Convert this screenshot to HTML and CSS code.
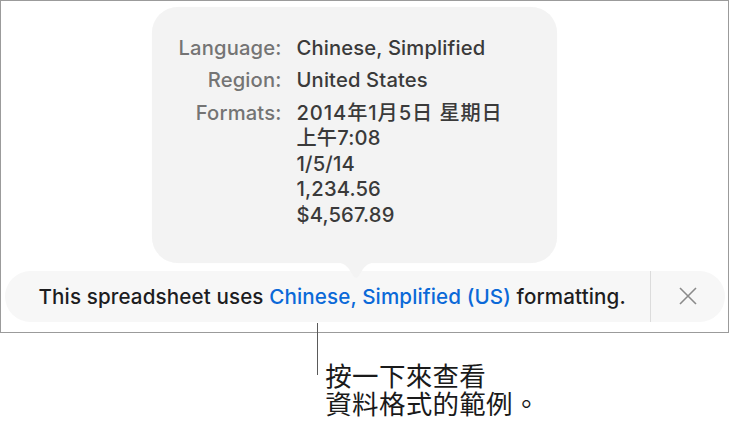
FILE: index.html
```html
<!DOCTYPE html>
<html lang="en">
<head>
<meta charset="utf-8">
<title>Formatting</title>
<link rel="stylesheet" href="styles.css">
</head>
<body>
<div class="frame">
  <div class="popover">
    <div class="info">
      <span class="label">Language:</span>
      <span class="value">Chinese, Simplified</span>
      <span class="label">Region:</span>
      <span class="value">United States</span>
      <span class="label">Formats:</span>
      <span class="value"><span class="cjk">2014年1月5日 星期日</span><br>上午7:08<br>1/5/14<br>1,234.56<br>$4,567.89</span>
    </div>
    <svg class="arrow" width="46" height="18" viewBox="0 0 46 18"><path d="M0 0 C8 0 12 2 16 7 L20.5 14 Q23 17.5 25.5 14 L30 7 C34 2 38 0 46 0 Z" fill="#f3f3f3"/></svg>
  </div>
  <div class="banner">
    <p class="msg">This spreadsheet uses <span class="link">Chinese, Simplified (US)</span> formatting.</p>
    <div class="divider"></div>
    <div class="close">
      <svg width="18" height="18" viewBox="0 0 18 18"><path d="M1 1 L17 17 M17 1 L1 17" stroke="#8a8a8a" stroke-width="1.6" fill="none"/></svg>
    </div>
  </div>
</div>
<div class="callout">
  <div class="leader"></div>
  <p class="caption"><span class="cap-line">按一下來查看</span><span class="cap-line">資料格式的範例。</span></p>
</div>
</body>
</html>
```
FILE: styles.css
```css
html, body {
  margin: 0;
  padding: 0;
  background: #ffffff;
}
body {
  font-family: Inter, "Liberation Sans", "Noto Sans CJK SC", sans-serif;
}
.frame {
  box-sizing: border-box;
  width: 729px;
  height: 333px;
  border: 1.5px solid #9b9b9b;
  padding-top: 5.5px;
}
.popover {
  position: relative;
  box-sizing: border-box;
  width: 405px;
  height: 256px;
  margin-left: 150.5px;
  background: #f3f3f3;
  border-radius: 26px;
  padding-top: 28px;
  box-shadow: 0 0 1px rgba(0,0,0,0.04);
}
.info {
  display: grid;
  grid-template-columns: 130px auto;
  column-gap: 15px;
  row-gap: 7px;
  font-size: 20.2px;
  line-height: 25.5px;
  font-weight: 500;
  letter-spacing: 0.15px;
}
.label {
  text-align: right;
  color: #747474;
}
.value {
  color: #3a3a3a;
}
.cjk {
  letter-spacing: 0.9px;
}
.arrow {
  position: absolute;
  top: 255px;
  left: 181px;
  display: block;
}
.banner {
  display: flex;
  align-items: stretch;
  box-sizing: border-box;
  width: 720px;
  height: 51px;
  margin: 8px 0 0 3.5px;
  background: #f7f7f7;
  border-radius: 26px;
}
.msg {
  flex: 1;
  margin: 0;
  padding-left: 34px;
  display: flex;
  align-items: center;
  font-size: 20.6px;
  font-weight: 500;
  letter-spacing: 0.12px;
  color: #1d1d1f;
  white-space: pre;
}
.link {
  color: #0b69d8;
}
.divider {
  width: 1px;
  background: #dcdcdc;
}
.close {
  width: 74px;
  display: flex;
  align-items: center;
  justify-content: center;
}
.close svg {
  display: block;
}
.callout {
  display: flex;
  align-items: flex-start;
  margin-top: -10px;
  padding-left: 316.5px;
}
.leader {
  width: 1.8px;
  height: 52px;
  background: #5a5a5a;
}
.caption {
  margin: 38px 0 0 7px;
  font-family: "Noto Sans CJK TC", "Noto Sans CJK SC", sans-serif;
  font-size: 26.5px;
  line-height: 28px;
  letter-spacing: 0.3px;
  color: #1a1a1a;
}
.cap-line {
  display: block;
  height: 28px;
}
```
